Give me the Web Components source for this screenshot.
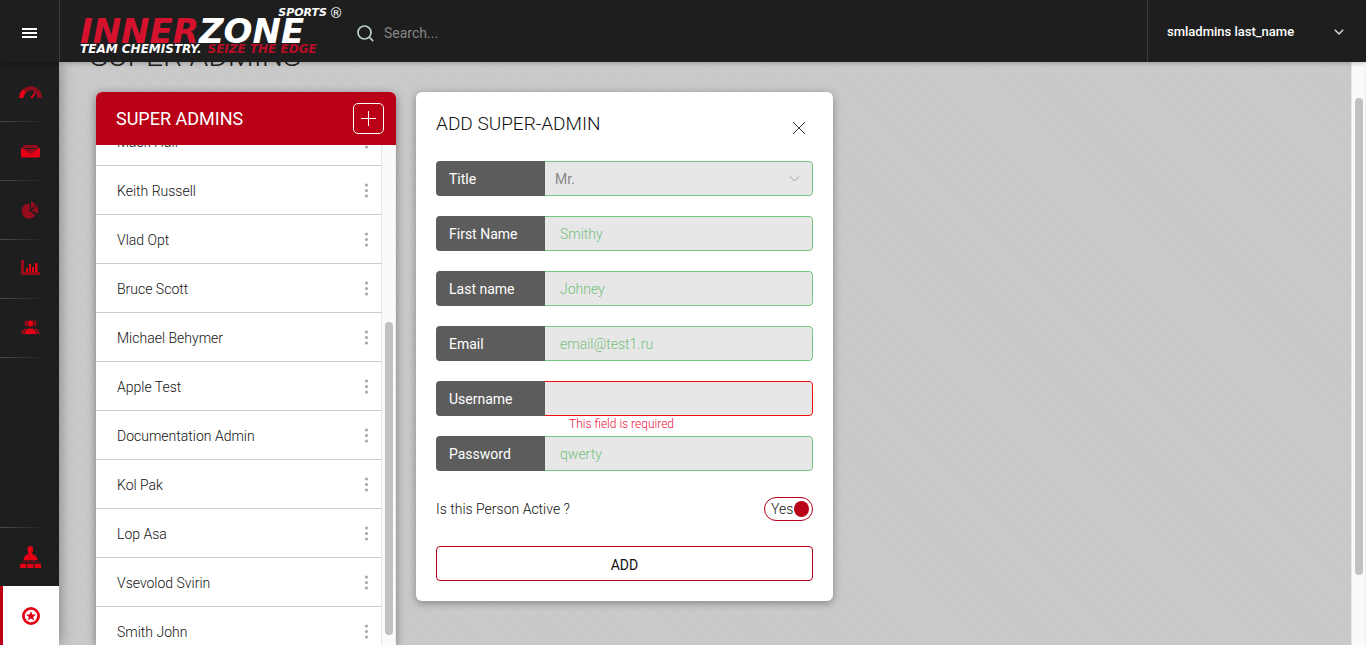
<!DOCTYPE html>
<html lang="en">
<head>
<meta charset="utf-8">
<title>Super Admins</title>
<style>
html,body{margin:0;height:100%;overflow:hidden}
body{font-family:Roboto,"Liberation Sans",sans-serif;font-size:14px;color:#111}
</style>
</head>
<body>
<iz-app></iz-app>
<script>
const define = (name, html, setup) => customElements.define(name, class extends HTMLElement {
  constructor() {
    super();
    this.attachShadow({mode: 'open'});
  }
  connectedCallback() {
    const t = document.createElement('template');
    t.innerHTML = '<style>*{box-sizing:border-box}:host{box-sizing:border-box}button,input,select{font:inherit;color:inherit;margin:0}</style>' + (typeof html === 'function' ? html(this) : html);
    this.shadowRoot.replaceChildren(t.content.cloneNode(true));
    if (setup) setup(this.shadowRoot, this);
  }
});

define('iz-logo', `
<style>
:host{display:block;font-family:"DejaVu Sans",sans-serif;font-weight:bold;font-style:italic;color:#fff;width:264px}
a{display:block;color:inherit;text-decoration:none}
.top{display:flex;justify-content:flex-end;align-items:center;gap:2px;height:12px;font-size:11px;line-height:12px;padding-right:1px}
.top i{font-weight:normal;font-style:normal;font-size:14px}
.name{font-size:34px;line-height:24px;height:24px;white-space:nowrap}
.tag{display:flex;gap:6px;font-size:12px;line-height:12px;white-space:nowrap}
.red{color:#d5122d}.dark{color:#b80d26}
</style>
<a href="#"><div class="top"><span>SPORTS</span><i>®</i></div>
<div class="name"><span class="red">INNER</span><span>ZONE</span></div>
<div class="tag"><span>TEAM CHEMISTRY.</span><span class="dark">SEIZE THE EDGE</span></div></a>`);

define('iz-header', `
<style>
:host{display:flex;height:62px;background:#1e1e1e;color:#fff;position:relative;z-index:2;box-shadow:0 1px 5px rgba(0,0,0,.25)}
button{background:none;border:0;padding:0;cursor:pointer}
.menu{width:60px;border-right:1px solid #3c3c3c;display:flex;align-items:center;justify-content:center}
.menu svg{margin-top:3px}
iz-logo{margin:7px 0 0 20px}
form{display:flex;align-items:center;gap:10px;margin-left:13px;padding-top:4px;flex:1}
input{background:none;border:0;outline:0;width:200px;padding:0;font-size:14px;line-height:20px}
input::placeholder{color:#858585;opacity:1}
.user{width:219px;border-left:1px solid #3c3c3c;display:flex;align-items:center;justify-content:space-between;padding:2px 22px 0 19px;font-weight:500;font-size:13px;line-height:18px}
</style>
<button class="menu" aria-label="Menu"><svg width="15" height="10"><path d="M0 1h15M0 5h15M0 9h15" stroke="#fff" stroke-width="2.200"/></svg></button>
<iz-logo></iz-logo>
<form role="search"><svg width="17" height="17" viewBox="0 0 17 17" fill="none" stroke="#b9cfcf" stroke-width="1.7"><circle cx="7.5" cy="7.5" r="6.5"/><path d="M12.2 12.2l4 4"/></svg>
<input type="text" placeholder="Search..." aria-label="Search"></form>
<button class="user"><span>smladmins last_name</span><svg width="10" height="6" fill="none" stroke="#ddd" stroke-width="1.4"><path d="M.8.8L5 5 9.200.8"/></svg></button>`);

const icons = {
  gauge: '<svg width="24" height="13" viewBox="0 0 24 13"><path d="M0 12A11.500 11.500 0 0 1 4.500 3L7.200 6.500Q4.500 9 4.500 12z" fill="#e50016"/><path d="M4.800 2.800Q11 -2 18 2.200L15.800 5.300Q11 3 7.500 6.200zM19.500 3.500Q23 7 23 12h-4.500Q18.500 9 17 7z" fill="#950c1d"/><path d="M20 .5L14 12h-3z" fill="#e50016"/></svg>',
  mail: '<svg width="19" height="13" viewBox="0 0 19 13"><path d="M2 2q0-2 2-2h11q2 0 2 2l1 2-8.500 5L1 4z" fill="#950c1d"/><path d="M3.500 3.500h12" stroke="#1e1e1e"/><path d="M0 2.500l9.500 6.500L19 2.500v8.500q0 1.500-1.500 1.500h-16Q0 12.500 0 11z" fill="#e50016"/></svg>',
  pie: '<svg width="17" height="17" viewBox="0 0 17 17" fill="#950c1d"><path d="M7.500 1.500v7.500l6.200 4A7.600 7.600 0 1 1 7.500 1.500z"/><path d="M9 0q3 .2 4.800 2.500L9 8zM14.500 3.200Q17 6.500 16 11.500L9.800 8.800z"/></svg>',
  bars: '<svg width="19" height="19" viewBox="0 0 19 19"><path d="M0 0h3v12h16v3H0z" fill="#950c1d"/><path d="M5 8h2v4H5zM8 4h2v8H8zM11 7h2v5h-2zM14 3h2.500v9H14z" fill="#e50016"/></svg>',
  users: '<svg width="19" height="17" viewBox="0 0 19 17"><g fill="#950c1d"><ellipse cx="6" cy="3.200" rx="2.500" ry="3"/><ellipse cx="13" cy="3.200" rx="2.500" ry="3"/><path d="M0 14q1-5 5-6l2 6zM19 14q-1-5-5-6l-2 6z"/></g><g fill="#e50016" stroke="#1e1e1e" stroke-width=".8"><ellipse cx="9.500" cy="3.500" rx="3.400" ry="3.600"/><path d="M3 14.500q.5-6.500 6.500-6.500t6.500 6.500z"/></g></svg>',
  org: '<svg width="21" height="22" viewBox="0 0 21 22"><path d="M7.500 3Q7.500 0 10.300 0t2.800 3-1.100 4.200V8q5 1 5.500 6h-14Q4 9 8.600 8V7.200Q7.500 6 7.500 3z" fill="#e50016"/><path d="M2 17l2-2h13l2 2M7 17.500l1-2M14 17.500l-1-2" stroke="#950c1d" fill="none"/><path d="M0 17.800h6.200V22H0zM7.300 17.800h6.200V22H7.300zM14.600 17.800H21V22h-6.400z" fill="#e50016"/></svg>',
  star: '<svg width="18" height="18" viewBox="0 0 18 18"><circle cx="9" cy="9" r="7.600" fill="none" stroke="#e50016" stroke-width="2.800"/><path d="M9 4l1.400 3.400 3.600.2-2.800 2.300.9 3.500L9 11.500l-3.100 1.900.9-3.500L4 7.600l3.600-.2z" fill="#e50016"/></svg>'
};
define('iz-nav-item', el => `
<style>
:host{display:block;height:59px}
a{display:flex;height:100%;align-items:center;justify-content:center;padding-right:1px;border-left:3px solid transparent;background:linear-gradient(90deg,#4a4a4a,#1e1e1e 46px) bottom/100% 1px no-repeat border-box}
:host([edge=top]) a{background-position:top}
:host([active]) a{background:#fff;border-left-color:#be0016}
</style>
<a href="#" aria-label="${el.getAttribute('label')}">${icons[el.getAttribute('icon')]}</a>`);

define('iz-sidebar', `
<style>
:host{display:flex;flex-direction:column;justify-content:space-between;background:#1e1e1e;padding-top:1px;position:relative;z-index:1;box-shadow:0 0 14px rgba(0,0,0,.4)}
</style>
<nav>
<iz-nav-item icon="gauge" label="Dashboard"></iz-nav-item><iz-nav-item icon="mail" label="Messages"></iz-nav-item><iz-nav-item icon="pie" label="Reports"></iz-nav-item><iz-nav-item icon="bars" label="Statistics"></iz-nav-item><iz-nav-item icon="users" label="Users"></iz-nav-item>
</nav>
<nav>
<iz-nav-item icon="org" label="Organisation" edge="top"></iz-nav-item><iz-nav-item icon="star" label="Super admins" active></iz-nav-item>
</nav>`);

define('iz-scrollbar', `
<style>
:host{display:block;width:15px;background:#fafafa;border-left:1px solid #e6e6e6;border-right:1px solid #efefef;padding:var(--from) 2px var(--to) 3px}
div{height:100%;border-radius:4px;background:#c1c1c1}
</style><div></div>`);

define('iz-row', `
<style>
:host{display:flex;align-items:center;justify-content:space-between;height:49px;border-bottom:1px solid #ccc;padding:0 12px 0 21px}
span{padding-top:2px;line-height:20px}
button{background:none;border:0;padding:0;width:5px;height:15px;display:flex}
</style>
<span><slot></slot></span>
<button aria-label="Actions"><svg width="5" height="15" fill="#a9a9a9"><circle cx="2.500" cy="2" r="1.600"/><circle cx="2.500" cy="7.500" r="1.600"/><circle cx="2.500" cy="13" r="1.600"/></svg></button>`);

define('iz-list', `
<style>
:host{display:flex;flex-direction:column;background:#fff;border-radius:6px 6px 0 0;overflow:hidden;box-shadow:0 2px 10px rgba(0,0,0,.4);min-height:0}
header{display:flex;flex:none;height:53px;align-items:center;justify-content:space-between;background:#b90016;color:#fff;padding:0 12px 0 20px}
h2{margin:0;font-size:18px;line-height:24px;font-weight:400}
header button{width:31px;height:31px;border:1px solid #fff;border-radius:5px;background:none;padding:0;display:grid;place-items:center}
.body{display:flex;flex:1;min-height:0;overflow:hidden}
.rows{flex:1;margin-top:-28px;font-weight:300}
iz-scrollbar{--from:177px;--to:10px}
</style>
<header><h2>SUPER ADMINS</h2><button aria-label="Add admin"><svg width="15" height="15" stroke="#fff"><path d="M7.500 0v15M0 7.500h15"/></svg></button></header>
<div class="body"><div class="rows"><slot></slot></div><iz-scrollbar></iz-scrollbar></div>`);

define('iz-field', el => {
  const v = el.getAttribute('value') || '';
  const sel = el.hasAttribute('select');
  return `
<style>
:host{display:block;--line:#74c77d}
:host([error]){--line:#f00d0d}
.f{display:flex;height:35px;border-radius:4px;overflow:hidden}
label{width:109px;flex:none;background:#5c5c5c;color:#fff;padding:1px 0 0 13px;line-height:34px;font-weight:400}
.c{flex:1;display:grid;min-width:0}
.c>*{grid-area:1/1}
input,select{width:100%;height:35px;min-width:0;background:#e7e7e7;border:1px solid var(--line);border-left:0;border-radius:0 4px 4px 0;outline:0;appearance:none}
input{padding:0 15px;color:#74c07e;font-weight:300}
select{padding:0 10px;color:#888}
svg{justify-self:end;align-self:center;margin-right:13px;pointer-events:none}
p{margin:0;height:20px;padding:0 0 4px 133px;font-size:12px;line-height:16px;color:#f0103c;font-weight:300}
</style>
<div class="f"><label for="c">${el.getAttribute('label')}</label><div class="c">${sel
  ? `<select id="c"><option>${v}</option></select><svg width="11" height="6" fill="none" stroke="#999"><path d="M1 .5l4.500 4.500L10 .5"/></svg>`
  : `<input id="c" type="text" value="${v}">`}</div></div>
<p>${el.getAttribute('error') || ''}</p>`;
});

define('iz-form', `
<style>
:host{display:block;background:#fff;border-radius:6px;padding:20px;box-shadow:0 2px 8px rgba(0,0,0,.35)}
header{display:flex;justify-content:space-between;height:49px;padding-right:7px}
h2{margin:0;font-size:19px;line-height:24px;font-weight:300}
header button{border:0;background:none;padding:7px 0 0;height:24px}
header svg{display:block}
.active{display:flex;justify-content:space-between;align-items:center;height:35px;margin:0 0 20px;font-weight:300}
.toggle{display:flex;align-items:center;gap:1px;width:49px;height:24px;border:1px solid #b90016;border-radius:12px;padding:0 3px 0 6px;justify-content:space-between}
.toggle input{appearance:none;width:16px;height:16px;border-radius:50%;background:#b90016}
.add{display:block;width:100%;height:35px;border:1px solid #b90016;border-radius:4px;background:#fff;padding:2px 0 0;color:#111}
</style>
<form>
<header><h2>ADD SUPER-ADMIN</h2><button type="button" aria-label="Close"><svg width="14" height="14" stroke="#333"><path d="M1 1l12 12M13 1L1 13"/></svg></button></header>
<slot></slot>
<div class="active"><span>Is this Person Active ?</span><label class="toggle" for="on"><span>Yes</span><input id="on" type="checkbox" checked></label></div>
<button type="button" class="add">ADD</button>
</form>`);

define('iz-app', `
<style>
:host{display:grid;height:100vh;grid-template:62px minmax(0,1fr)/59px minmax(0,1fr) 15px}
iz-header{grid-column:1/-1}
main{min-width:0;overflow:hidden;padding:0 37px;display:flex;flex-direction:column;background:repeating-linear-gradient(45deg,#cbcbcb 0 2px,#c6c6c6 2px 3px)}
h1{flex:none;margin:-26px 0 16px -6px;font-size:30px;line-height:40px;font-weight:300;color:#1d1d1d}
.cols{flex:1;min-height:0;display:grid;grid-template:minmax(0,1fr)/300px minmax(0,417px);gap:20px}
iz-form{align-self:start}
.page{--from:36px;--to:70px}
</style>
<iz-header></iz-header>
<iz-sidebar></iz-sidebar>
<main>
<h1>SUPER ADMINS</h1>
<div class="cols">
<iz-list>
<iz-row>Mack Hall</iz-row><iz-row>Keith Russell</iz-row><iz-row>Vlad Opt</iz-row><iz-row>Bruce Scott</iz-row><iz-row>Michael Behymer</iz-row><iz-row>Apple Test</iz-row><iz-row>Documentation Admin</iz-row><iz-row>Kol Pak</iz-row><iz-row>Lop Asa</iz-row><iz-row>Vsevolod Svirin</iz-row><iz-row>Smith John</iz-row>
</iz-list>
<iz-form>
<iz-field label="Title" value="Mr." select></iz-field>
<iz-field label="First Name" value="Smithy"></iz-field>
<iz-field label="Last name" value="Johney"></iz-field>
<iz-field label="Email" value="email@test1.ru"></iz-field>
<iz-field label="Username" error="This field is required"></iz-field>
<iz-field label="Password" value="qwerty"></iz-field>
</iz-form>
</div>
</main>
<iz-scrollbar class="page"></iz-scrollbar>`);
</script>
</body>
</html>
